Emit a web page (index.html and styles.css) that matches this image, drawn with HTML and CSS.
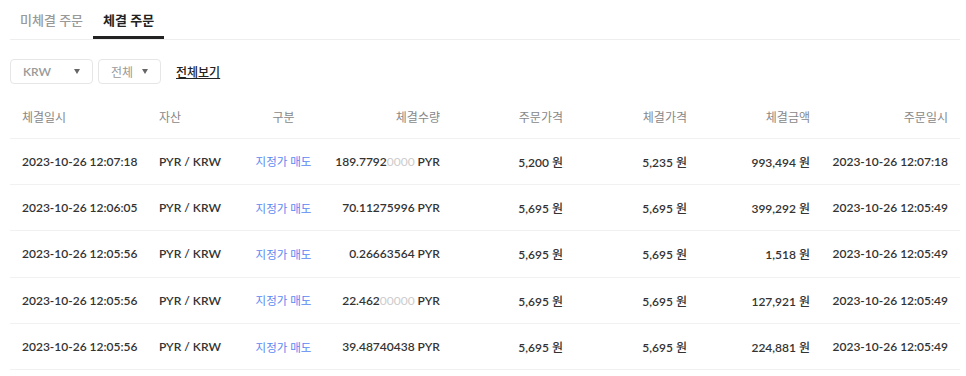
FILE: index.html
```html
<!DOCTYPE html>
<html lang="ko">
<head>
  <meta charset="UTF-8" />
  <title>체결 주문</title>
  <link rel="stylesheet" href="styles.css">
</head>
<body>
  <div class="container">
    <nav class="tabs">
      <a class="tab">미체결 주문</a>
      <a class="tab active">체결 주문</a>
    </nav>

    <div class="filter">
      <div class="select"><span>KRW</span><i class="caret"></i></div>
      <div class="select small"><span>전체</span><i class="caret"></i></div>
      <a class="all-link">전체보기</a>
    </div>

    <table class="orders">
      <colgroup>
        <col style="width: 149px">
        <col style="width: 85px">
        <col style="width: 79px">
        <col style="width: 117px">
        <col style="width: 123px">
        <col style="width: 124px">
        <col style="width: 123px">
        <col style="width: 150px">
      </colgroup>
      <thead>
        <tr>
          <th class="left">체결일시</th>
          <th class="left">자산</th>
          <th class="center">구분</th>
          <th>체결수량</th>
          <th>주문가격</th>
          <th>체결가격</th>
          <th>체결금액</th>
          <th>주문일시</th>
        </tr>
      </thead>
      <tbody>
        <tr>
          <td class="left">2023-10-26 12:07:18</td>
          <td class="left">PYR / KRW</td>
          <td class="center sell">지정가 매도</td>
          <td>189.7792<span class="zero">0000</span> PYR</td>
          <td>5,200 <span class="unit">원</span></td>
          <td>5,235 <span class="unit">원</span></td>
          <td>993,494 <span class="unit">원</span></td>
          <td>2023-10-26 12:07:18</td>
        </tr>
        <tr>
          <td class="left">2023-10-26 12:06:05</td>
          <td class="left">PYR / KRW</td>
          <td class="center sell">지정가 매도</td>
          <td>70.11275996 PYR</td>
          <td>5,695 <span class="unit">원</span></td>
          <td>5,695 <span class="unit">원</span></td>
          <td>399,292 <span class="unit">원</span></td>
          <td>2023-10-26 12:05:49</td>
        </tr>
        <tr>
          <td class="left">2023-10-26 12:05:56</td>
          <td class="left">PYR / KRW</td>
          <td class="center sell">지정가 매도</td>
          <td>0.26663564 PYR</td>
          <td>5,695 <span class="unit">원</span></td>
          <td>5,695 <span class="unit">원</span></td>
          <td>1,518 <span class="unit">원</span></td>
          <td>2023-10-26 12:05:49</td>
        </tr>
        <tr>
          <td class="left">2023-10-26 12:05:56</td>
          <td class="left">PYR / KRW</td>
          <td class="center sell">지정가 매도</td>
          <td>22.462<span class="zero">00000</span> PYR</td>
          <td>5,695 <span class="unit">원</span></td>
          <td>5,695 <span class="unit">원</span></td>
          <td>127,921 <span class="unit">원</span></td>
          <td>2023-10-26 12:05:49</td>
        </tr>
        <tr>
          <td class="left">2023-10-26 12:05:56</td>
          <td class="left">PYR / KRW</td>
          <td class="center sell">지정가 매도</td>
          <td>39.48740438 PYR</td>
          <td>5,695 <span class="unit">원</span></td>
          <td>5,695 <span class="unit">원</span></td>
          <td>224,881 <span class="unit">원</span></td>
          <td>2023-10-26 12:05:49</td>
        </tr>
      </tbody>
    </table>
  </div>
</body>
</html>
```

FILE: styles.css
```css
* {
  box-sizing: border-box;
}

body {
  margin: 0;
  font-family: Lato, "Noto Sans CJK KR", sans-serif;
  background: #fff;
  color: #333;
}

.container {
  margin: 0 6px 0 10px;
}

.tabs {
  display: flex;
  border-bottom: 1px solid #eee;
  height: 40px;
}

.tab {
  display: block;
  padding: 10px 10px 0;
  font-size: 13px;
  font-weight: 500;
  color: #999;
  cursor: pointer;
}

.tab.active {
  color: #222;
  font-weight: 700;
  border-bottom: 3px solid #222;
}

.filter {
  display: flex;
  align-items: center;
  gap: 5px;
  margin-top: 19px;
  height: 25px;
}

.select {
  display: flex;
  align-items: center;
  justify-content: space-between;
  width: 83px;
  height: 25px;
  padding: 0 12px;
  border: 1px solid #e6e6e6;
  border-radius: 4px;
  font-size: 12px;
  font-weight: 600;
  color: #999;
}

.select.small {
  width: 63px;
  font-weight: 400;
}

.caret {
  width: 0;
  height: 0;
  border-left: 3px solid transparent;
  border-right: 3px solid transparent;
  border-top: 5px solid #666;
}

.all-link {
  margin-left: 10px;
  font-size: 12px;
  font-weight: 500;
  color: #222;
  text-decoration: underline;
  cursor: pointer;
}

.orders {
  width: 100%;
  table-layout: fixed;
  border-collapse: collapse;
  margin-top: 11px;
  font-size: 12px;
}

.orders th {
  height: 43px;
  font-weight: 400;
  color: #888;
  text-align: right;
  padding: 0;
  border-bottom: 1px solid #f1f1f1;
}

.orders td {
  height: 46.4px;
  font-weight: 600;
  color: #333;
  text-align: right;
  padding: 0;
  border-bottom: 1px solid #f1f1f1;
  white-space: nowrap;
}

.orders th:first-child,
.orders td:first-child {
  padding-left: 12px;
}

.orders th:last-child,
.orders td:last-child {
  padding-right: 12px;
}

.orders .left {
  text-align: left;
}

.orders .center {
  text-align: center;
}

.orders .sell {
  color: #5a87f2;
  font-size: 11.5px;
  font-weight: 400;
}

.unit {
  font-weight: 500;
}

.zero {
  color: #ccc;
  font-weight: 400;
}
```
